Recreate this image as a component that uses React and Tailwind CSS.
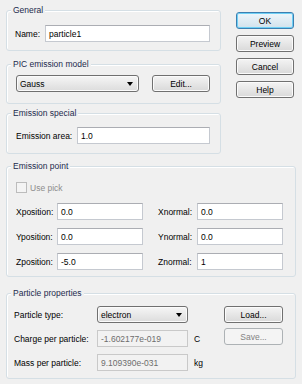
import React from "react";

// Windows-style "Particle" dialog

function Group({ title, className = "", children }) {
  return (
    <div
      className={`relative rounded-[3px] border border-[#d5dfe5] shadow-[inset_1px_1px_0_#ffffff] ${className}`}
    >
      <span className="absolute left-[4px] top-[-6px] bg-[#f0f0f0] px-[2px] leading-[10px] text-[#1c2a4d]">
        {title}
      </span>
      {children}
    </div>
  );
}

function TextBox({ value, className = "", disabled = false }) {
  return (
    <div
      className={`flex h-[17px] items-center border pl-[3px] ${
        disabled
          ? "border-[#c9c9c9] bg-[#f2f2f2] text-[#6d6d6d]"
          : "border-[#c5c9d0] border-t-[#abadb3] bg-white text-black"
      } ${className}`}
    >
      {value}
    </div>
  );
}

function Combo({ value, className = "" }) {
  return (
    <div
      className={`flex h-[17px] items-center justify-between rounded-[3px] border border-[#707070] bg-linear-to-b from-[#f6f6f6] to-[#dcdcdc] pl-[3px] pr-[5px] shadow-[inset_0_0_0_1px_#fbfbfb] ${className}`}
    >
      <span>{value}</span>
      <svg width="6" height="4" viewBox="0 0 6 4">
        <path d="M0 0h6L3 4z" fill="#000" />
      </svg>
    </div>
  );
}

function Button({ children, className = "", primary = false, disabled = false }) {
  let look =
    "border-[#707070] bg-linear-to-b from-[#f4f4f4] to-[#d9d9d9] shadow-[inset_0_0_0_1px_#fbfbfb] text-black";
  if (primary)
    look =
      "border-[#3c7fb1] bg-linear-to-b from-[#eef6fb] to-[#d2e2ec] shadow-[inset_0_0_0_1px_#6fd0f5] text-black";
  if (disabled) look = "border-[#adb2b5] bg-[#f4f4f4] text-[#838383]";
  return (
    <div
      className={`flex h-[17px] items-center justify-center rounded-[3px] border ${look} ${className}`}
    >
      {children}
    </div>
  );
}

function CoordRow({ label, value, labelW }) {
  return (
    <div className="flex items-center">
      <span className={labelW}>{label}</span>
      <TextBox value={value} className="w-[86px]" />
    </div>
  );
}

export default function App() {
  return (
    <div className="h-[384px] w-[302px] overflow-hidden bg-[#f0f0f0] pl-[6px] pr-[6px] pt-[10px] font-['Liberation_Sans',Arial,sans-serif] text-[8.5px] leading-[10px] text-black">
      <div className="flex gap-[15px]">
        {/* Left column */}
        <div className="w-[215px]">
          <Group title="General" className="h-[41px] pl-[8px] pr-[10px] pt-[14px]">
            <div className="flex items-center">
              <span className="w-[30px]">Name:</span>
              <TextBox value="particle1" className="flex-1" />
            </div>
          </Group>

          <Group title="PIC emission model" className="mt-[13px] h-[40px] pl-[9px] pt-[10px]">
            <div className="flex items-center gap-[13px]">
              <Combo value="Gauss" className="w-[123px]" />
              <Button className="w-[58px]">Edit...</Button>
            </div>
          </Group>

          <Group title="Emission special" className="mt-[9px] h-[41px] pl-[9px] pt-[13px]">
            <div className="flex items-center">
              <span className="w-[61px]">Emission area:</span>
              <TextBox value="1.0" className="w-[133px]" />
            </div>
          </Group>
        </div>

        {/* Right column */}
        <div className="flex w-[58px] flex-col gap-[6px] pt-[2px]">
          <Button primary>OK</Button>
          <Button>Preview</Button>
          <Button>Cancel</Button>
          <Button>Help</Button>
        </div>
      </div>

      <Group title="Emission point" className="mt-[12px] h-[111px] pl-[9px] pt-[15px]">
        <div className="flex items-center gap-[3px] text-[#8d8d8d]">
          <span className="h-[11px] w-[11px] border border-[#bcbcbc] bg-[#f4f4f4]" />
          <span>Use pick</span>
        </div>
        <div className="mt-[10px] flex gap-[15px]">
          <div className="flex flex-col gap-[8px]">
            <CoordRow label="Xposition:" value="0.0" labelW="w-[41px]" />
            <CoordRow label="Yposition:" value="0.0" labelW="w-[41px]" />
            <CoordRow label="Zposition:" value="-5.0" labelW="w-[41px]" />
          </div>
          <div className="flex flex-col gap-[8px]">
            <CoordRow label="Xnormal:" value="0.0" labelW="w-[39px]" />
            <CoordRow label="Ynormal:" value="0.0" labelW="w-[39px]" />
            <CoordRow label="Znormal:" value="1" labelW="w-[39px]" />
          </div>
        </div>
      </Group>

      <Group title="Particle properties" className="mt-[16px] h-[86px] pl-[7px] pt-[12px]">
        <div className="flex">
          <div className="flex w-[210px] flex-col gap-[7px]">
            <div className="flex items-center">
              <span className="w-[83px]">Particle type:</span>
              <Combo value="electron" className="w-[91px]" />
            </div>
            <div className="flex items-center">
              <span className="w-[83px]">Charge per particle:</span>
              <TextBox value="-1.602177e-019" disabled className="w-[91px]" />
              <span className="ml-[6px]">C</span>
            </div>
            <div className="flex items-center">
              <span className="w-[83px]">Mass per particle:</span>
              <TextBox value="9.109390e-031" disabled className="w-[91px]" />
              <span className="ml-[6px]">kg</span>
            </div>
          </div>
          <div className="flex w-[59px] flex-col gap-[5px]">
            <Button>Load...</Button>
            <Button disabled>Save...</Button>
          </div>
        </div>
      </Group>
    </div>
  );
}
